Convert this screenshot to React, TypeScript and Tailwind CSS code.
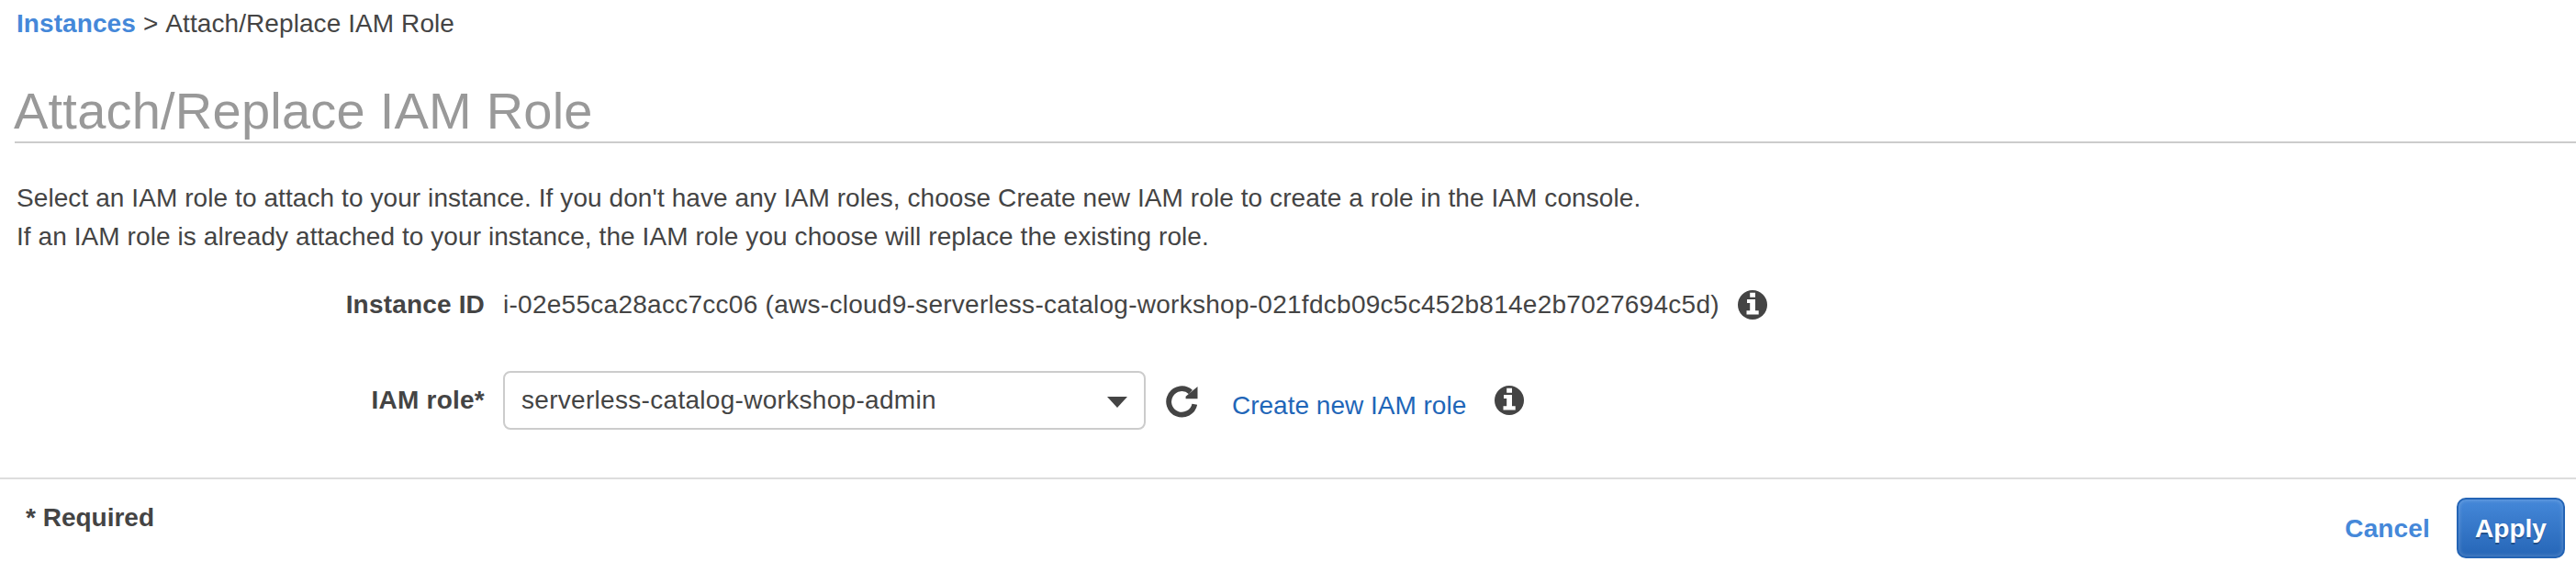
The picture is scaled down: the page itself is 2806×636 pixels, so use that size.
import React from "react";

function InfoIcon() {
  return (
    <svg className="block h-8 w-8 shrink-0" viewBox="0 0 32 32">
      <circle cx="16" cy="16" r="16" fill="#444" />
      <path d="M13.200 2.800h5.800v5h-5.800zM10 10h9v12.300h3.700v4.200H9.500v-4.200h3.700V14H10z" fill="#fff" />
    </svg>
  );
}

function RefreshIcon() {
  return (
    <svg className="block h-[35px] w-[35px] shrink-0" viewBox="0 0 35 35">
      <path d="M31.300 20.200A14.200 14.200 0 1 1 27 7" fill="none" stroke="#444" strokeWidth="5.800" />
      <path d="M34.500 1v13.200H21.600V11.800z" fill="#444" />
    </svg>
  );
}

export default function App() {
  return (
    <div className="h-[636px] w-full overflow-hidden bg-white font-['Liberation_Sans',Arial,sans-serif] text-[28px] leading-[42px] text-[#444]">
      <nav className="flex h-[72px] gap-2 whitespace-pre pl-[18px] pt-[5px] tracking-[0.08px]">
        <a className="font-bold text-[#4588d9]">Instances</a>
        <span>&gt;</span>
        <span>Attach/Replace IAM Role</span>
      </nav>
      <h1 className="ml-4 flex h-[84px] items-start whitespace-nowrap border-b-2 border-[#ccc] pt-[17px] text-[56px] leading-[64px] tracking-[0.22px] text-[#999]">
        <span className="-ml-px">Attach/Replace IAM Role</span>
      </h1>
      <div className="pl-[18px] pt-[39px] tracking-[0.08px]">
        <p className="flex"><span>Select an IAM role to attach to your instance. If you don't have any IAM roles, choose Create new IAM role to create a role in the IAM console.</span></p>
        <p className="flex"><span>If an IAM role is already attached to your instance, the IAM role you choose will replace the existing role.</span></p>
      </div>
      <div className="mt-8 flex h-[42px] items-center">
        <div className="flex w-[548px] justify-end pr-5 font-bold tracking-[0.18px]"><span>Instance ID</span></div>
        <div className="w-[1345px] whitespace-nowrap tracking-[0.27px]"><span>i-02e55ca28acc7cc06 (aws-cloud9-serverless-catalog-workshop-021fdcb09c5c452b814e2b7027694c5d)</span></div>
        <InfoIcon />
      </div>
      <div className="mt-[51px] flex h-16 items-center">
        <div className="flex w-[548px] justify-end pr-5 font-bold tracking-[0.25px]"><span>IAM role*</span></div>
        <div className="flex h-16 w-[700px] items-center justify-between rounded-lg border-2 border-[#ccc] pl-[18px] pr-[18px] tracking-[0.3px]">
          <span>serverless-catalog-workshop-admin</span>
          <svg className="mt-1 h-3 w-[22px]" viewBox="0 0 22 12"><path d="M0 0h22L11 12z" fill="#444" /></svg>
        </div>
        <div className="ml-[22px] mt-0.5"><RefreshIcon /></div>
        <a className="ml-[37px] mt-3 text-[#1f66b8]">Create new IAM role</a>
        <div className="ml-[31px]"><InfoIcon /></div>
      </div>
      <footer className="mt-[52px] flex h-[116px] items-start justify-between border-t-2 border-[#ddd] pl-7 pr-3 font-bold">
        <span className="mt-[21px]">* Required</span>
        <div className="mt-5 flex items-center gap-[29px]">
          <a className="mt-0.5 tracking-[0.15px] text-[#4588d9]">Cancel</a>
          <button className="flex h-[66px] w-[118px] items-center justify-center rounded-[10px] border-2 border-[#2464b5] bg-linear-to-b from-[#4588d9] to-[#2666b7] pt-0.5 text-white shadow-[inset_0_0_4px_1px_rgba(255,255,255,0.2)] [text-shadow:0_2px_0_rgba(0,0,0,0.3)]">
            <span>Apply</span>
          </button>
        </div>
      </footer>
    </div>
  );
}
